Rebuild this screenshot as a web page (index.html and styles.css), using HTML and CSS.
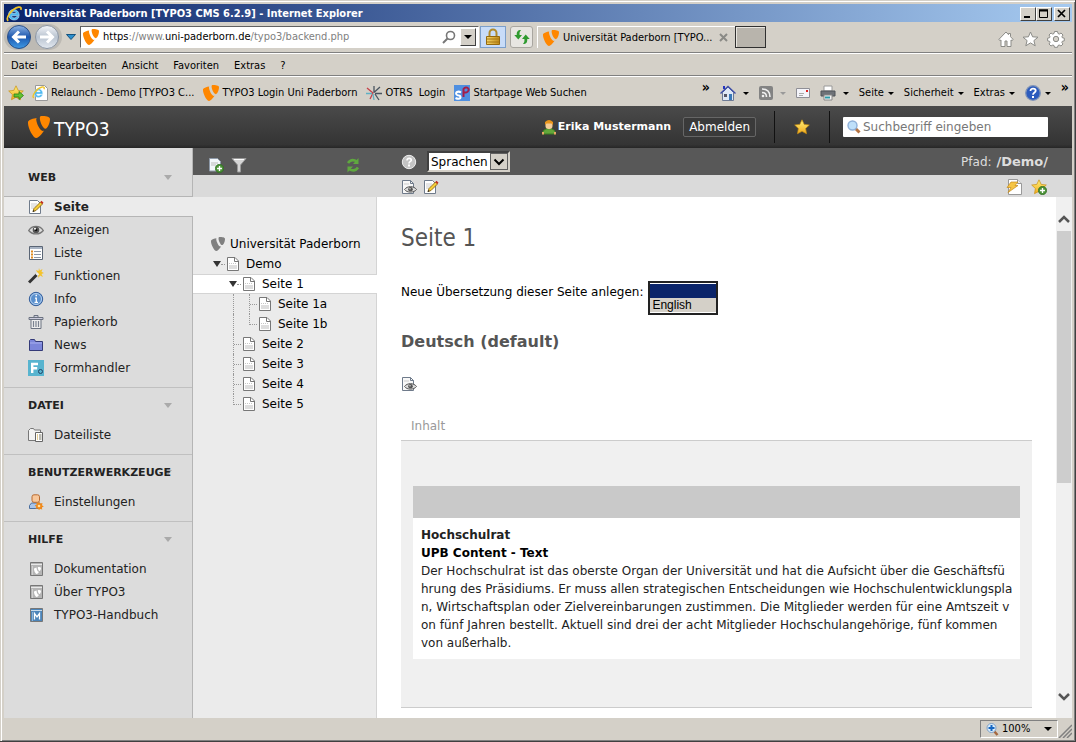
FILE: index.html
```html
<!DOCTYPE html>
<html lang="de">
<head>
<meta charset="utf-8">
<title>Universität Paderborn [TYPO3 CMS 6.2.9]</title>
<link rel="stylesheet" href="styles.css">
</head>
<body>
<svg class="defs" width="0" height="0" aria-hidden="true">
  <defs>
    <linearGradient id="gBack" x1="0" y1="0" x2="0" y2="1"><stop offset="0" stop-color="#8fb4e4"/><stop offset=".5" stop-color="#1d57ae"/><stop offset="1" stop-color="#3f9be6"/></linearGradient>
    <linearGradient id="gFwd" x1="0" y1="0" x2="0" y2="1"><stop offset="0" stop-color="#f4f6f9"/><stop offset=".5" stop-color="#b9c3d0"/><stop offset="1" stop-color="#e3e9f0"/></linearGradient>
    <linearGradient id="gStar" x1="0" y1="0" x2="0" y2="1"><stop offset="0" stop-color="#fff27a"/><stop offset="1" stop-color="#f0a81c"/></linearGradient>
    <linearGradient id="gLock" x1="0" y1="0" x2="1" y2="0"><stop offset="0" stop-color="#f6d76a"/><stop offset="1" stop-color="#c08a17"/></linearGradient>
  </defs>
  <symbol id="typo3" viewBox="0 0 16 16"><path d="M11.6 10.8c-.3.1-.5.1-.8.1C8.500 10.900 6 4.700 6 2.600c0-.8.2-1 .4-1.200C3.900 1.700.7 2.600.1 4c-.2.300-.1.700-.1 1.200C0 8.500 3.600 16 6.100 16c1.200 0 3.500-2.100 5.500-5.200M9.900 0c2.600 0 6.100.3 6.100 2.200 0 3.300-2 7-3.200 7-2.100 0-4.200-5.200-4.200-7.600C8.600.3 9.100 0 9.900 0"/></symbol>
  <symbol id="ie" viewBox="0 0 16 16"><path d="M13.200 9.700H5.600c.2 2.700 4.200 2.800 5 .9h2.500C11.500 16 2.600 15 2.600 8.500c0-7 10.800-6.800 10.600 1.200zM5.700 7.300h4.500c-.2-2.300-4.200-2.300-4.500 0z" fill="#4db8f0" stroke="#d6f0ff" stroke-width=".5"/><path d="M2.200 14.800C-1 12 6 2.500 12.500 1.200c2.600-.5 2.900 1 2.300 2.700" fill="none" stroke="#f0c428" stroke-width="1.700"/></symbol>
  <symbol id="page" viewBox="0 0 16 16"><path d="M2.500 1.500h7.500l3.500 3.500v9.500h-11z" fill="#fff" stroke="#777"/><path d="M9.500 2v3.500h3.500" fill="none" stroke="#777"/><path d="M4 9h8v4H4z" fill="#dedede"/><path d="M4 7.500h8" stroke="#c8c8c8" stroke-dasharray="1 1"/></symbol>
  <symbol id="edit" viewBox="0 0 16 16"><path d="M1.500 1.500h8l3 3v10h-11z" fill="#fff" stroke="#6f7b8b"/><path d="M3 5h6M3 7h5M3 9h3" stroke="#ccc"/><path d="M5 12.500 6 9.500 12.500 3l2 2L8 11.500z" fill="#f6cf38" stroke="#8a6414" stroke-width=".9"/><path d="m12.300 3 1.200-1.200 2 2L14.300 5z" fill="#c5281c"/><path d="M4.600 13l.8-2 1.200 1.200z" fill="#222"/></symbol>
  <symbol id="view" viewBox="0 0 16 16"><path d="M1.500 1.500h8l3 3v10h-11z" fill="#f8f8f8" stroke="#6f7b8b"/><path d="M9.500 1.500v3h3" fill="none" stroke="#6f7b8b"/><path d="M3 5h5" stroke="#ccc"/><path d="M3.500 10.500C6 6.700 13 6.700 15.500 10.500 13 14 6 14 3.500 10.500z" fill="#ddd" stroke="#555"/><circle cx="9.500" cy="10.300" r="2.300" fill="#555"/><circle cx="9" cy="9.700" r=".7" fill="#eee"/></symbol>
  <symbol id="star" viewBox="0 0 16 16"><path d="m8 .8 2.200 4.600 5.100.6-3.700 3.500.9 5.200L8 12.300l-4.500 2.400.9-5.200L.7 6l5.100-.6z" fill="url(#gStar)" stroke="#c98f12" stroke-width=".7"/></symbol>
  <symbol id="plus" viewBox="0 0 8 8"><circle cx="4" cy="4" r="3.700" fill="#4b9137" stroke="#2d6a20" stroke-width=".6"/><path d="M4 1.800v4.400M1.800 4h4.400" stroke="#fff" stroke-width="1.200"/></symbol>
  <symbol id="book" viewBox="0 0 16 16"><path d="M2.500 1.500h12v13h-12z" fill="currentColor" stroke="#777"/><path d="M3 3.500h11" stroke="#fff" stroke-opacity=".7"/><path d="M4.500 5v9" stroke="#fff" stroke-opacity=".4"/></symbol>
</svg>

<div class="window">
  <header class="titlebar">
    <svg class="i16"><use href="#ie"/></svg>
    <h1>Universität Paderborn [TYPO3 CMS 6.2.9] - Internet Explorer</h1>
    <div class="winbtns">
      <button aria-label="Minimieren"><svg width="12" height="10"><path d="M2 8h6" stroke="#000" stroke-width="2"/></svg></button>
      <button aria-label="Maximieren"><svg width="12" height="10"><path d="M1.500 1.500h8v7h-8zM1 1h9" fill="none" stroke="#000"/><path d="M1 1.500h9" stroke="#000" stroke-width="2"/></svg></button>
      <button class="close" aria-label="Schließen"><svg width="12" height="10"><path d="m2 1 7 7M9 1 2 8" stroke="#000" stroke-width="1.700"/></svg></button>
    </div>
  </header>

  <div class="navbar">
    <div class="travel">
      <button aria-label="Zurück"><svg width="26" height="26"><circle cx="13" cy="13" r="11.500" fill="url(#gBack)" stroke="#2b4f86"/><path d="M20 13H8M13 7.500 7.500 13l5.500 5.500" fill="none" stroke="#fff" stroke-width="3"/></svg></button>
      <button aria-label="Vorwärts"><svg width="26" height="26"><circle cx="13" cy="13" r="11.500" fill="url(#gFwd)" stroke="#8b95a3"/><path d="M6 13h12M13 7.500l5.500 5.500-5.500 5.500" fill="none" stroke="#fff" stroke-width="3"/></svg></button>
    </div>
    <button class="recent" aria-label="Verlauf"><svg width="10" height="6"><path d="M.5.500h9L5 5.500z" fill="#2c8fce" stroke="#15537f"/></svg></button>
    <div class="address">
      <svg class="i16 orange"><use href="#typo3"/></svg>
      <a class="url" href="#"><b>https</b>://www.<b>uni-paderborn.de</b>/typo3/backend.php</a>
      <svg width="14" height="14"><circle cx="8.500" cy="5.500" r="4" fill="none" stroke="#777" stroke-width="1.600"/><path d="m5.500 8.500-4.500 4.500" stroke="#777" stroke-width="2"/></svg>
      <button class="drop" aria-label="Adressliste"><i class="tri"></i></button>
    </div>
    <button class="lock" aria-label="Sicherheitsbericht"><svg width="16" height="18"><path d="M4.500 9V5a3.500 3.500 0 0 1 7 0v4" fill="none" stroke="#b08a2c" stroke-width="2"/><path d="M1.500 8.500h13v8h-13z" fill="url(#gLock)" stroke="#94690f"/><path d="M2 11h12M2 14h12" stroke="#a67717"/></svg></button>
    <button class="reload" aria-label="Aktualisieren"><svg width="16" height="16"><path d="M7 1C3.500 1 2.500 3 2.800 6H.3L4.300 10.500 8 6H5.600C5.400 4 5.600 2.500 7 1z" fill="#2f9a2f"/><path d="M9 15c3.500 0 4.500-2 4.200-5h2.500L11.700 5.500 8 10h2.400c.2 2 0 3.500-1.400 5z" fill="#2f9a2f"/></svg></button>
    <div class="tab">
      <svg class="i16 orange"><use href="#typo3"/></svg>
      <span>Universität Paderborn [TYPO...</span>
      <button aria-label="Tab schließen"><svg width="9" height="9"><path d="m1 1 7 7M8 1 1 8" stroke="#8a8a86" stroke-width="2"/></svg></button>
    </div>
    <button class="newtab" aria-label="Neuer Tab"></button>
    <div class="ietools">
      <button aria-label="Startseite"><svg width="16" height="16"><path d="M8 1 .8 8.500l1.200 1L3 9v6.500h4V10h2v5.500h4V9l1 .5 1.200-1L12.500 5.700V2.500h-2v1.200z" fill="#fff" stroke="#8b8b87"/></svg></button>
      <button aria-label="Favoriten"><svg width="17" height="16"><path d="m8.500 1 2.100 4.800 5.400.4-4.100 3.400 1.300 5.200-4.700-2.900-4.700 2.900 1.300-5.200L1 6.200l5.400-.4z" fill="#fff" stroke="#8b8b87"/></svg></button>
      <button aria-label="Extras"><svg width="18" height="18" viewBox="-9 -9 18 18"><path d="M-1.500-7.500h3l.5 2 1.300.6L5-6l2 2-1.100 1.800.4.900 2 .5v2.600l-2 .5-.5 1L7 5 5 7 3.200 6l-1.200.5-.5 1.800h-3L-2 6.500-3.200 6-5 7-7 5l1-1.700-.4-1-2-.5V-.8l2-.5.4-.9L-7-4l2-2 1.700 1.100 1.300-.6z" fill="#fff" stroke="#8b8b87"/><circle r="2.700" fill="#d4d0c8" stroke="#8b8b87"/></svg></button>
    </div>
  </div>

  <nav class="menubar">
    <a href="#">Datei</a><a href="#">Bearbeiten</a><a href="#">Ansicht</a><a href="#">Favoriten</a><a href="#">Extras</a><a href="#">?</a>
  </nav>

  <div class="favbar">
    <svg class="i16"><use href="#star"/><path d="M6 9h5V6.500l4.500 4-4.500 4V12H6z" fill="#63c331" stroke="#2c7d14" stroke-width=".8"/></svg>
    <div class="links">
      <a href="#"><svg class="i16"><path d="M3.500.500h9l3 3v12h-12z" fill="#fff" stroke="#999"/><use href="#ie" y="1" width="13" height="13"/></svg><span>Relaunch - Demo [TYPO3 C...</span></a>
      <a href="#"><svg class="i16 orange"><use href="#typo3"/></svg><span>TYPO3 Login Uni Paderborn</span></a>
      <a href="#"><svg class="i16"><g fill="none" stroke-width="1.300"><path d="M7 8 1 3M7 8l-3 6" stroke="#c6424a"/><path d="M8 8V1M8.500 7 14 2M9 8.500h7M9 9l4 6" stroke="#4a5560"/><path d="M0 8.500h6M7 9l1 6" stroke="#5fb0c4"/></g></svg><span>OTRS&nbsp; Login</span></a>
      <a href="#"><svg class="i16"><path d="M0 0h16v16H0z" fill="#4f8fe0"/><path d="M7 7.500C4 5.500 1 7.500 2.500 9.500s4 0 4 2.500-3 2-5 1" fill="none" stroke="#fff" stroke-width="2"/><path d="M9.500 12V4c2-3 6-1 5 1.500s-4 2.500-5 1" fill="none" stroke="#a41e49" stroke-width="2"/></svg><span>Startpage Web Suchen</span></a>
    </div>
    <div class="cmds">
      <span class="chev">»</span>
      <button aria-label="Startseite"><svg class="i16"><path d="M3 1h2v3H3z" fill="#2434c0"/><path d="M2.500 7.500v8h11v-8L8 2z" fill="#dfe8f5" stroke="#6d7a94"/><path d="m.5 8.500 7.500-7 7.500 7" fill="none" stroke="#3e4ea8" stroke-width="1.400"/><path d="M4 9h3v3H4z" fill="#556"/><path d="M9 9h3v6H9z" fill="#3a78b8"/></svg><i class="tri"></i></button>
      <button class="rss" aria-label="Feeds"><svg width="14" height="14"><rect width="14" height="14" rx="2" fill="#838383"/><g fill="none" stroke="#eee" stroke-width="1.600"><path d="M3 3q8 0 8 8M3 6.500Q7.500 6.500 7.500 11"/></g><circle cx="4" cy="10" r="1.300" fill="#eee"/></svg><i class="tri grey"></i></button>
      <button aria-label="Mail"><svg width="14" height="12"><path d="M.5 1.500h13v9H.5z" fill="#f4f4fa" stroke="#8f8f96"/><path d="M10 3h2v2h-2z" fill="#d22"/><path d="M3 6.500h5M3 8.500h4" stroke="#aaa"/></svg></button>
      <button aria-label="Drucken"><svg class="i16"><path d="M4 1h8v5H4z" fill="#fff" stroke="#999"/><path d="M1 6h14v5H1z" fill="#6e7278" stroke="#4e5258"/><path d="M4 10h8v5H4z" fill="#f5f5f5" stroke="#888"/><path d="M5 12.500h5" stroke="#2b9aa8" stroke-width="2"/></svg><i class="tri"></i></button>
      <button class="txt">Seite<i class="tri"></i></button>
      <button class="txt">Sicherheit<i class="tri"></i></button>
      <button class="txt">Extras<i class="tri"></i></button>
      <button class="help" aria-label="Hilfe"><svg class="i16"><circle cx="8" cy="8" r="7.300" fill="#2c5bbd" stroke="#8094b8" stroke-width="1.300"/><path d="M5.500 6c0-3.500 5.200-3 5.200-.2C10.700 7.500 8 7.500 8 9.800" fill="none" stroke="#fff" stroke-width="1.800"/><path d="M7 11h2v2H7z" fill="#fff"/></svg><i class="tri"></i></button>
      <span class="chev">»</span>
    </div>
  </div>

  <div class="backend">
    <header class="topbar">
      <a class="logo" href="#"><svg class="orange" width="22" height="22"><use href="#typo3"/></svg><span>TYPO3</span></a>
      <div class="user">
        <svg width="14" height="15"><path d="M.5 14q0-5.500 6.500-5.500t6.500 5.500z" fill="#63a63a" stroke="#3d7a22"/><path d="M0 12h2v2.500H0zM12 12h2v2.500h-2z" fill="#e8a665"/><rect x="3.500" y="2" width="7" height="7" rx="3" fill="#f6cc97"/><path d="M3 5V2q4-4 8 0v3L9.500 3.500h-5z" fill="#e8951c"/></svg>
        <b>Erika Mustermann</b>
        <button class="logout">Abmelden</button>
      </div>
      <button class="bookmark" aria-label="Lesezeichen"><svg class="i16"><use href="#star"/></svg></button>
      <label class="search"><svg width="14" height="14"><path d="m8 8 4.500 4.500" stroke="#b57342" stroke-width="3"/><circle cx="5.500" cy="5.500" r="4.500" fill="#bfe0fa" stroke="#8fb0d8" stroke-width="1.400"/></svg><input type="text" placeholder="Suchbegriff eingeben" aria-label="Suche"></label>
    </header>

    <div class="main">
      <nav class="modules">
        <section>
          <h2>WEB<i class="fold"></i></h2>
          <a href="#" class="active"><svg class="i16"><use href="#edit"/></svg>Seite</a>
          <a href="#"><svg class="i16"><path d="M.7 8.500C4 3 12 3 15.300 8.500 12 13 4 13 .7 8.500z" fill="#ddd" stroke="#777" stroke-width="1.300"/><circle cx="8" cy="8" r="3.300" fill="#555"/><circle cx="8" cy="8" r="1.300" fill="#111"/><circle cx="7" cy="6.700" r="1" fill="#fff"/></svg>Anzeigen</a>
          <a href="#"><svg class="i16"><path d="M1.500 1.500h13v13h-13z" fill="#fff" stroke="#5a6575"/><path d="M2 3h12" stroke="#a9b4c4" stroke-width="2"/><path d="M3 6.500h2M3 9.500h2M3 12.500h2" stroke="#e08a1e" stroke-width="2"/><path d="M6 6.500h7M6 9.500h7M6 12.500h7" stroke="#8c96a5"/></svg>Liste</a>
          <a href="#"><svg class="i16"><path d="m11 0 .8 2.500L14.500 1l-1 2.700L16 5l-2.500 1 1.500 3-3-1.500L10.500 10 10 7 7 6.500 9.500 5 8 2l2.500 1z" fill="#f4c32d"/><path d="m1 14.500 8-8" stroke="#333" stroke-width="3"/><path d="m8.500 7 1.700-1.700" stroke="#eee" stroke-width="3"/></svg>Funktionen</a>
          <a href="#"><svg class="i16"><circle cx="8" cy="8" r="6.700" fill="#5a90ce" stroke="#355f9c"/><circle cx="8" cy="8" r="5.500" fill="none" stroke="#b9d2ee"/><path d="M7 7.200h1.300V11M6.500 11.300h3.500M7.500 4.500h1.500" fill="none" stroke="#fff" stroke-width="1.300"/></svg>Info</a>
          <a href="#"><svg class="i16"><path d="M3 5.500h10v9H3z" fill="#eee" stroke="#6b7280"/><path d="M1 3.500h14v2H1zM6 3V1.500h4V3" fill="#ccd" stroke="#6b7280"/><path d="M5.500 7v6M8 7v6M10.500 7v6" stroke="#7a8290" stroke-width="1.200"/></svg>Papierkorb</a>
          <a href="#"><svg class="i16"><path d="M1.500 13.500v-10l1-1h4l1 2h7v9z" fill="#7c86da" stroke="#343a78"/><path d="M2 6h12" stroke="#a8b0f0"/></svg>News</a>
          <a href="#"><svg class="i16"><path d="M0 0h16v16H0z" fill="#58b4cf"/><path d="M4.200 13V4H10M4.200 8.200h5" fill="none" stroke="#fff" stroke-width="2.400"/><circle cx="12.500" cy="11.500" r="2" fill="none" stroke="#246"/></svg>Formhandler</a>
        </section>
        <section>
          <h2>DATEI<i class="fold"></i></h2>
          <a href="#"><svg class="i16"><path d="M.5 13.500V3.500l2-2h3l1 1.500h6v10.500z" fill="#f3f3f3" stroke="#777"/><path d="M7.500 5.500h7v9h-7z" fill="#fff" stroke="#666"/><path d="M9 8h1M9 10h1M9 12h1" stroke="#c92"/><path d="M11 8h2.500M11 10h2.500M11 12h2.500" stroke="#776"/></svg>Dateiliste</a>
        </section>
        <section>
          <h2>BENUTZERWERKZEUGE<i class="fold"></i></h2>
          <a href="#"><svg class="i16"><path d="M1.500 14.500v-3l2-2.500h8l2 2.500v3z" fill="#a9c4e8" stroke="#4b6f9f"/><rect x="4" y=".8" width="7.500" height="7.500" rx="2" fill="#f8c79a" stroke="#b86b31"/><path d="m11 7.500 1.200 2 2.300-.5-.5 2.300 1.800 1.200-2 1 .5 2-2.200-.5-1.100 1-1.200-1.500-2.300.3.800-2-1.600-1.300 2-1-.4-2 2 .6z" fill="#f08a1c"/><circle cx="11" cy="12" r="1.300" fill="#ffe0a0"/></svg>Einstellungen</a>
        </section>
        <section>
          <h2>HILFE<i class="fold"></i></h2>
          <a href="#"><svg class="i16 gbook"><use href="#book"/><use class="white" href="#typo3" x="6" y="6" width="7" height="7"/></svg>Dokumentation</a>
          <a href="#"><svg class="i16 gbook"><use href="#book"/><use class="white" href="#typo3" x="6" y="6" width="7" height="7"/></svg>Über TYPO3</a>
          <a href="#"><svg class="i16 bbook"><use href="#book"/><path d="M6.500 12.500v-6L9 10l2.500-3.500v6" fill="none" stroke="#fff" stroke-width="1.300"/></svg>TYPO3-Handbuch</a>
        </section>
      </nav>

      <aside class="treecol">
        <div class="bar dark treebar">
          <button aria-label="Neue Seite"><svg class="i16"><path d="M1.500 1.500h8l3 3v9.500h-11z" fill="#f2f6fa" stroke="#8d99a8"/><path d="M3 6h7M3 8h5" stroke="#bbb"/><use href="#plus" x="7" y="7" width="9" height="9"/></svg></button>
          <button aria-label="Filter"><svg class="i16"><path d="M1 1.500h14L9.500 8v7h-3V8z" fill="#d5d5d5" stroke="#999"/><path d="M3 2.500h10" stroke="#fff"/></svg></button>
          <button class="refresh" aria-label="Neu laden"><svg class="i16"><g fill="none" stroke="#5fa83f" stroke-width="2.600"><path d="M3 6q3.500-5 9-1.500"/><path d="M13 10.500q-3.500 5-9 1.500"/></g><path d="M13.500 1v6H8zM2.500 15.500v-6H8z" fill="#5fa83f"/></svg></button>
        </div>
        <div class="bar light"></div>
        <div class="tree">
          <a href="#" class="lv0"><svg class="grey" width="14" height="14"><use href="#typo3"/></svg>Universität Paderborn</a>
          <a href="#" class="lv1"><i class="open"></i><i class="dash"></i><svg class="i16"><use href="#page"/></svg>Demo</a>
          <a href="#" class="lv2 sel"><i class="open"></i><i class="dash"></i><svg class="i16"><use href="#page"/></svg>Seite 1</a>
          <a href="#" class="lv3"><i class="rail"></i><i class="stem"></i><svg class="i16"><use href="#page"/></svg>Seite 1a</a>
          <a href="#" class="lv3"><i class="rail"></i><i class="stem last"></i><svg class="i16"><use href="#page"/></svg>Seite 1b</a>
          <a href="#" class="lv2n"><i class="stem"></i><svg class="i16"><use href="#page"/></svg>Seite 2</a>
          <a href="#" class="lv2n"><i class="stem"></i><svg class="i16"><use href="#page"/></svg>Seite 3</a>
          <a href="#" class="lv2n"><i class="stem"></i><svg class="i16"><use href="#page"/></svg>Seite 4</a>
          <a href="#" class="lv2n"><i class="stem last"></i><svg class="i16"><use href="#page"/></svg>Seite 5</a>
        </div>
      </aside>

      <main class="doc">
        <div class="bar dark docbar">
          <button aria-label="Hilfe"><svg class="i16"><circle cx="8" cy="8" r="6.700" fill="#c4c4c4" stroke="#eee"/><path d="M6 6.500c0-3 4.300-2.600 4.300-.3C10.300 7.500 8 7.500 8 9.500" fill="none" stroke="#fff" stroke-width="1.600"/><path d="M7 10.500h2v2H7z" fill="#fff"/></svg></button>
          <div class="combo">
            <select aria-label="Ansicht"><option>Sprachen</option></select>
            <i><svg width="12" height="8"><path d="m1.500 1.500 4.500 4.500 4.500-4.500" fill="none" stroke="#000" stroke-width="2"/></svg></i>
          </div>
          <p class="path">Pfad: <b>/Demo/</b></p>
        </div>
        <div class="bar light actions">
          <button aria-label="Ansehen"><svg class="i16"><use href="#view"/></svg></button>
          <button aria-label="Bearbeiten"><svg class="i16"><use href="#edit"/></svg></button>
          <span class="grow"></span>
          <button aria-label="Cache löschen"><svg class="i16"><path d="M2.500.500h9l4 4v11h-13z" fill="#fff" stroke="#999"/><path d="M11.500.500v4h4" fill="#eee" stroke="#999"/><path d="M5 3h7L9 6.500h3L2 13.500 5 8.500H1z" fill="#f6c544" stroke="#c48a1c" stroke-width=".7"/></svg></button>
          <button aria-label="Lesezeichen anlegen"><svg class="i16"><use href="#star"/><use href="#plus" x="7" y="7" width="9" height="9"/></svg></button>
        </div>
        <div class="scroll">
          <article class="page">
            <h2 class="title">Seite 1</h2>
            <div class="translate">
              <label for="lang">Neue Übersetzung dieser Seite anlegen:</label>
              <select id="lang" size="2"><option class="cur" value="" aria-label="leer"></option><option>English</option></select>
            </div>
            <h3>Deutsch (default)</h3>
            <button class="viewbtn" aria-label="Ansehen"><svg class="i16"><use href="#view"/></svg></button>
            <div class="colname">Inhalt</div>
            <div class="column">
              <div class="card">
                <div class="cardhead"></div>
                <div class="cardbody">
                  <b class="soft">Hochschulrat</b><br>
                  <b>UPB Content - Text</b><br>
                  <a href="#">Der Hochschulrat ist das oberste Organ der Universität und hat die Aufsicht über die Geschäftsfü<br>hrung des Präsidiums. Er muss allen strategischen Entscheidungen wie Hochschulentwicklungspla<br>n, Wirtschaftsplan oder Zielvereinbarungen zustimmen. Die Mitglieder werden für eine Amtszeit v<br>on fünf Jahren bestellt. Aktuell sind drei der acht Mitglieder Hochschulangehörige, fünf kommen<br>von außerhalb.</a>
                </div>
              </div>
            </div>
          </article>
          <div class="sbar">
            <svg width="14" height="10"><path d="m2 8 5-5 5 5" fill="none" stroke="#555" stroke-width="2.500"/></svg>
            <div class="thumb"></div>
            <svg width="14" height="10"><path d="m2 2 5 5 5-5" fill="none" stroke="#555" stroke-width="2.500"/></svg>
          </div>
        </div>
      </main>
    </div>
  </div>

  <footer class="status">
    <button class="zoom"><svg width="13" height="13"><path d="m7.500 7.500 4 4.500" stroke="#a5673f" stroke-width="2.500"/><circle cx="5.500" cy="5" r="4.500" fill="#d9ecfb" stroke="#7f9fc4"/><path d="M5.500 2v6M2.500 5h6" stroke="#1767c2" stroke-width="2"/></svg><span>100%</span><i class="tri"></i></button>
    <svg class="grip" width="14" height="14"><path d="M1 14 14 1M5 14l9-9M9 14l5-5" stroke="#808080" stroke-width="1.500"/></svg>
  </footer>
</div>
</body>
</html>
```
FILE: styles.css
```css
* { box-sizing: border-box; }
html, body { margin: 0; height: 100%; }
body { font: 12px/18px "DejaVu Sans", sans-serif; color: #000; background: #d4d0c8; overflow: hidden; }
button { margin: 0; padding: 0; border: 0; background: none; font: inherit; color: inherit; display: flex; align-items: center; justify-content: center; }
a { color: inherit; text-decoration: none; }
h1, h2, h3, p { margin: 0; font-size: inherit; }
svg { display: block; flex: none; }
.defs { position: absolute; }
.i16 { width: 16px; height: 16px; }
.orange { fill: #ff8700; }
.grey { fill: #808080; }
.white { fill: #fff; }
.tri { flex: none; width: 0; height: 0; border: 3px solid transparent; border-top-color: #000; border-bottom: 0; }
.tri.grey { border-top-color: #999; }

.window { height: 100vh; display: flex; flex-direction: column; padding: 4px 3px 3px 4px; border-right: 1px solid #404040; border-bottom: 1px solid #404040; box-shadow: inset 1px 1px #d4d0c8, inset 2px 2px #fff, inset -1px -1px #808080; background: #d4d0c8; }
.titlebar, .navbar, .menubar, .favbar, .status { font: 11px/14px "DejaVu Sans Condensed", "DejaVu Sans", sans-serif; display: flex; align-items: center; flex: none; white-space: nowrap; }

.titlebar { height: 18px; padding: 1px 2px 0; gap: 2px; background: linear-gradient(90deg, #0a246a, #a6caf0); color: #fff; }
.titlebar h1 { flex: 1; font-weight: bold; }
.winbtns { display: flex; }
.winbtns button { width: 16px; height: 14px; background: #d4d0c8; border: 1px solid; border-color: #fff #404040 #404040 #fff; }
.winbtns .close { margin-left: 2px; }

.navbar { height: 31px; border-bottom: 1px solid #808080; box-shadow: 0 1px #fff; }
.travel { display: flex; gap: 2px; padding: 0 2px; border-radius: 14px; background: #bdbab4; margin-right: 1px; }
.recent { width: 15px; margin-right: 2px; }
.address { flex: 0 1 399px; min-width: 0; height: 22px; display: flex; align-items: center; gap: 4px; padding: 1px 2px; background: #fff; border: 1px solid; border-color: #606060 #fff #fff #606060; }
.url { flex: 1; color: #808080; overflow: hidden; }
.url b { font-weight: normal; color: #000; }
.drop { width: 16px; height: 18px; background: #d4d0c8; border: 1px solid; border-color: #fff #404040 #404040 #fff; }
.drop .tri { border-width: 4px 4px 0; }
.lock { flex: none; width: 26px; height: 22px; margin-left: 1px; background: #c8dcf8; border: 1px solid #7c9fca; }
.reload { flex: none; width: 23px; height: 22px; margin: 0 4px; border: 1px solid #a9a6a0; border-radius: 3px; background: #e8e6e2; }
.tab { flex: 0 1 198px; height: 22px; display: flex; align-items: center; gap: 4px; padding: 0 7px 0 5px; border: solid #fff; border-width: 1px 0 0 1px; }
.tab span { flex: 1; }
.newtab { flex: none; width: 31px; height: 22px; background: #b8b4ac; border: 1px solid #303030; box-shadow: inset 1px 1px #e8e6e0; }
.ietools { margin-left: auto; display: flex; align-items: center; gap: 8px; padding: 3px 7px 0 0; }

.menubar { height: 23px; padding: 3px 7px 0; gap: 15px; border-bottom: 1px solid #808080; box-shadow: 0 1px #fff; }
.favbar { height: 30px; padding: 4px 3px 0 4px; gap: 8px; }
.links { display: flex; gap: 9px; }
.links a { display: flex; align-items: center; gap: 3px; }
.cmds { margin-left: auto; display: flex; align-items: center; gap: 10px; }
.cmds button { gap: 7px; }
.cmds .txt, .cmds .help { gap: 4px; }
.chev { align-self: flex-start; font-size: 14px; line-height: 4px; font-weight: bold; }

.backend { flex: 1; min-height: 0; display: flex; flex-direction: column; }
.topbar { flex: none; height: 42px; display: flex; align-items: center; padding: 0 24px; background: linear-gradient(#4a4a4a, #343434 92%, #262626); color: #fff; }
.logo { display: flex; align-items: center; gap: 4px; font: 19px/24px "Liberation Sans Narrow", "DejaVu Sans Condensed", sans-serif; color: #fff; }
.logo span { padding-top: 4px; }
.user { margin-left: auto; display: flex; align-items: center; gap: 2px; font-size: 12px; }
.user b { font-size: 11px; }
.logout { margin-left: 10px; height: 20px; padding: 0 5px; border: 1px solid #666; border-radius: 2px; background: #3a3a3a; }
.bookmark { width: 56px; height: 32px; margin: 0 13px 0 18px; border: solid #111; border-width: 0 1px; }
.search { display: flex; align-items: center; gap: 2px; width: 205px; height: 20px; padding-left: 4px; background: #fff; border-radius: 1px; }
.search input { flex: 1; min-width: 0; border: 0; padding: 0; background: none; font: inherit; outline: 0; }
.search input::placeholder { color: #777; opacity: 1; }

.main { flex: 1; min-height: 0; display: flex; }
.modules { flex: 0 0 189px; background: #dcdcdc; border-right: 1px solid #b5b5b5; color: #222; }
.modules section { border-top: 1px solid #c0c0c0; padding-bottom: 8px; }
.modules section:first-child { border-top: 0; padding-top: 12px; }
.modules h2 { position: relative; z-index: 0; height: 35px; padding-left: 24px; font: bold 11px/35px "DejaVu Sans", sans-serif; color: #222; }
.modules a { display: flex; align-items: center; gap: 10px; height: 23px; padding-left: 24px; }
.modules .active { height: 21px; margin: 1px -1px 1px 0; background: #ebebeb; border: solid #b5b5b5; border-width: 1px 0; font-weight: bold; }
.fold { position: absolute; right: 20px; top: 15px; border: 4px solid transparent; border-top: 5px solid #aaa; border-bottom: 0; z-index: -1; }
.gbook { color: #b5b5b5; }
.bbook { color: #4c85ba; }

.bar { flex: none; display: flex; align-items: center; }
.dark { height: 27px; background: #585858; }
.light { height: 22px; background: #dadada; }
.treecol { flex: 0 0 184px; display: flex; flex-direction: column; }
.treebar { padding: 7px 16px 0 15px; gap: 7px; }
.refresh { margin-left: auto; }
.tree { flex: 1; padding-top: 37px; background: #ebebeb; border-right: 1px solid #d4d4d4; }
.tree a { display: flex; align-items: center; height: 20px; white-space: nowrap; }
.tree svg { margin-right: 5px; }
.lv0 { padding-left: 18px; }
.lv1 { padding-left: 20px; }
.lv2 { padding-left: 36px; }
.lv2n { padding-left: 40px; }
.tree .sel { background: #fff; margin-right: -1px; border: solid #d4d4d4; border-width: 1px 0; }
.open { border: 4px solid transparent; border-top: 6px solid #333; border-bottom: 0; }
.dash { width: 4px; border-top: 1px dotted #999; }
.stem { align-self: stretch; width: 8px; margin-bottom: 9px; border: dotted #999; border-width: 0 0 1px 1px; }
.stem:not(.last) { margin-bottom: 0; border-bottom: 0; background: repeating-linear-gradient(90deg, #999 0 1px, transparent 1px 2px) 0 10px / 8px 1px no-repeat; }
.lv3 { padding-left: 40px; }
.rail { align-self: stretch; width: 16px; border-left: 1px dotted #999; }

.doc { flex: 1; min-width: 0; display: flex; flex-direction: column; background: #fff; }
.docbar { padding: 0 24px; gap: 10px; color: #ddd; }
.combo { position: relative; display: flex; }
.combo select { appearance: none; width: 83px; height: 21px; padding: 0 0 0 2px; margin: 0; border: 2px solid; border-color: #404040 #d4d0c8 #d4d0c8 #404040; border-radius: 0; background: #fff; font: 12px/16px "DejaVu Sans", sans-serif; color: #000; }
.combo i { position: absolute; right: 2px; top: 2px; width: 18px; height: 17px; display: flex; align-items: center; justify-content: center; background: #d4d0c8; border: 1px solid #606060; pointer-events: none; }
.path { margin-left: auto; }
.path b { margin-left: 1px; font-size: 13px; }
.actions { padding: 2px 25px 0 24px; gap: 6px; }
.actions button:last-child { margin-left: 3px; }
.grow { flex: 1; }
.scroll { flex: 1; min-height: 0; display: flex; }
.page { flex: 1; min-width: 0; padding: 24px 24px 0 24px; overflow: hidden; }
.title { font: 24px/34px "Liberation Sans Narrow", "DejaVu Sans Condensed", sans-serif; color: #555; margin-bottom: 26px; }
.translate { display: flex; gap: 5px; height: 34px; line-height: 22px; white-space: nowrap; }
.translate select { width: 70px; height: 34px; margin: 0; padding: 1px 0; border: 2px solid #222; border-radius: 0; background: #fff; font: 12px/14px "Liberation Sans", sans-serif; overflow: hidden; scrollbar-width: none; outline: 0; }
.translate option { height: 14px; min-height: 14px; padding: 0 2px; background: #d4d0c8; color: #000; }
.translate .cur { background: #0a246a; }
h3 { margin-top: 15px; font: bold 16px/24px "DejaVu Sans", sans-serif; color: #555; }
.viewbtn { margin-top: 22px; }
.colname { margin-top: 24px; padding: 0 10px; height: 24px; line-height: 20px; color: #999; }
.column { padding: 45px 12px 48px; background: #f0f0f0; border: solid #ccc; border-width: 1px 0; }
.card { background: #fff; }
.cardhead { height: 32px; background: #c9c9c9; }
.cardbody { padding: 8px 8px 7px; white-space: nowrap; color: #000; }
.cardbody a, .soft { color: #222; }
.sbar { flex: 0 0 16px; display: flex; flex-direction: column; align-items: center; padding: 17px 0 16px; background: #f0f0f0; }
.thumb { width: 14px; height: 252px; margin: 7px 0 auto; background: #cdcdcd; }

.status { height: 20px; justify-content: flex-end; align-items: stretch; }
.zoom { width: 78px; justify-content: flex-start; padding-left: 5px; gap: 3px; border: 1px solid; border-color: #808080 #fff #fff #808080; margin: 2px 0 0; }
.zoom .tri { margin-left: 11px; border-width: 4px 4px 0; }
.grip { align-self: flex-end; }
```
